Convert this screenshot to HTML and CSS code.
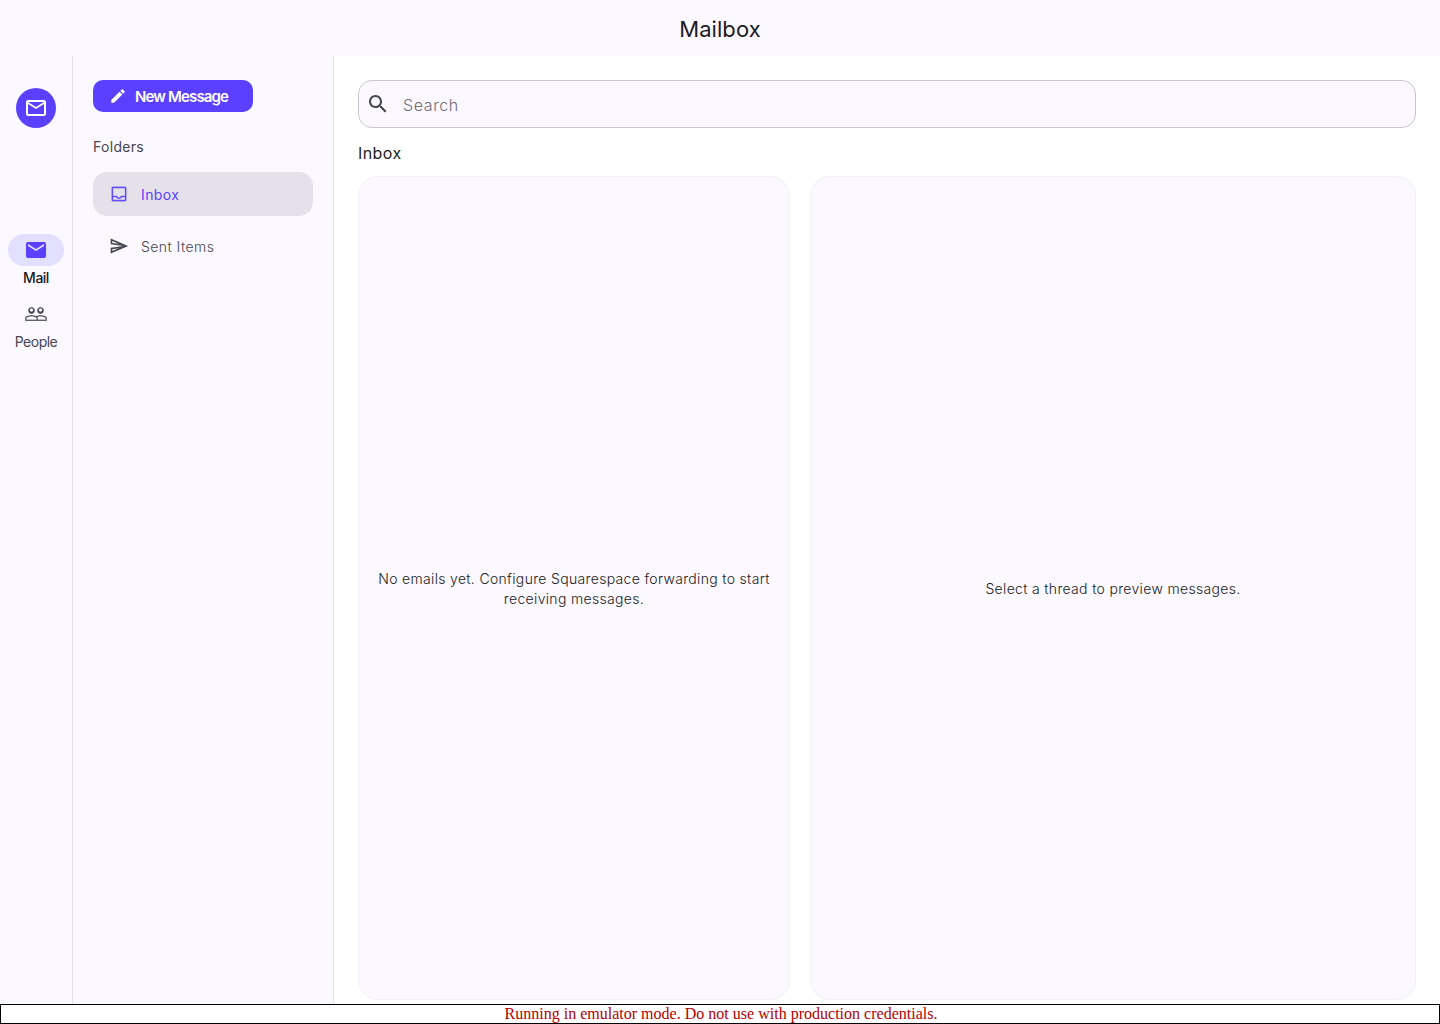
FILE: index.html
```html
<!DOCTYPE html>
<html lang="en">
<head>
<meta charset="utf-8">
<title>Mailbox</title>
<link rel="stylesheet" href="styles.css">
</head>
<body>
<div class="app">
  <header class="topbar"><h1 class="title">Mailbox</h1></header>
  <div class="body">
    <nav class="rail">
      <div class="logo"><svg class="i24" viewBox="0 0 24 24"><path d="M22 6c0-1.1-.9-2-2-2H4c-1.1 0-2 .9-2 2v12c0 1.1.9 2 2 2h16c1.100 0 2-.9 2-2V6zm-2 0l-8 5-8-5h16zm0 12H4V8l8 5 8-5v10z"/></svg></div>
      <div class="rail-items">
        <div class="rail-item active">
          <div class="pill"><svg class="i24" viewBox="0 0 24 24"><path d="M20 4H4c-1.100 0-1.990.9-1.990 2L2 18c0 1.100.9 2 2 2h16c1.100 0 2-.9 2-2V6c0-1.100-.9-2-2-2zm0 4l-8 5-8-5V6l8 5 8-5v2z"/></svg></div>
          <span class="rail-label">Mail</span>
        </div>
        <div class="rail-item">
          <div class="pill"><svg class="i24 thin" viewBox="0 0 24 24"><path d="M16.5 13c-1.200 0-3.070.34-4.500 1-1.430-.67-3.300-1-4.500-1C5.330 13 1 14.080 1 16.250V19h22v-2.750c0-2.170-4.330-3.250-6.500-3.250zm-4 4.500h-10v-1.250c0-.54 2.560-1.750 5-1.750s5 1.210 5 1.750v1.250zm9 0H14v-1.250c0-.46-.2-.86-.52-1.220.88-.3 1.960-.53 3.020-.53 2.440 0 5 1.210 5 1.750v1.250zM7.500 12c1.930 0 3.500-1.570 3.500-3.500S9.430 5 7.500 5 4 6.570 4 8.500 5.570 12 7.500 12zm0-5.500c.83 0 1.500.67 1.500 1.500s-.67 1.500-1.500 1.500S6 8.830 6 8s.67-1.500 1.500-1.500zm9 5.500c1.930 0 3.500-1.570 3.500-3.500S18.430 5 16.500 5 13 6.570 13 8.500s1.570 3.500 3.500 3.500zm0-5.500c.83 0 1.500.67 1.500 1.500s-.67 1.500-1.500 1.500S15 8.830 15 8s.67-1.500 1.500-1.500z"/></svg></div>
          <span class="rail-label">People</span>
        </div>
      </div>
    </nav>
    <aside class="folders">
      <button class="compose"><svg class="i18" viewBox="0 0 24 24"><path d="M3 17.250V21h3.750L17.810 9.940l-3.750-3.750L3 17.250zM20.710 7.040c.39-.39.39-1.020 0-1.410l-2.340-2.340c-.39-.39-1.020-.39-1.410 0l-1.830 1.830 3.750 3.750 1.830-1.830z"/></svg><span>New Message</span></button>
      <div class="folders-head">Folders</div>
      <div class="folder selected"><svg class="i20 thin-sel" viewBox="0 0 24 24"><path d="M19 3H4.990c-1.110 0-1.980.89-1.980 2L3 19c0 1.100.88 2 1.990 2H19c1.100 0 2-.9 2-2V5c0-1.110-.9-2-2-2zm0 16H5v-3h3.560c.69 1.190 1.970 2 3.450 2s2.750-.81 3.450-2H19v3zm0-5h-4.990c0 1.100-.9 2-2 2s-2-.9-2-2H5V5h14v9z"/></svg><span class="folder-name">Inbox</span></div>
      <div class="folder"><svg class="i20" viewBox="0 0 24 24"><path d="M4.010 6.030l7.510 3.220-7.520-1 .01-2.220m7.500 8.720L4 17.970v-2.220l7.510-1M2.010 3L2 10l15 2-15 2 .01 7L23 12 2.010 3z"/></svg><span class="sent">Sent Items</span></div>
    </aside>
    <main class="main">
      <div class="search">
        <svg class="i24" viewBox="0 0 24 24"><path d="M15.500 14h-.79l-.28-.27C15.410 12.590 16 11.110 16 9.500 16 5.910 13.090 3 9.500 3S3 5.910 3 9.500 5.910 16 9.500 16c1.610 0 3.090-.59 4.230-1.570l.27.28v.79l5 4.990L20.490 19l-4.990-5zm-6 0C7.010 14 5 11.990 5 9.500S7.010 5 9.500 5 14 7.010 14 9.500 11.990 14 9.500 14z"/></svg>
        <span class="placeholder">Search</span>
      </div>
      <h2 class="section">Inbox</h2>
      <div class="panes">
        <section class="pane"><p>No emails yet. Configure Squarespace forwarding to start receiving messages.</p></section>
        <section class="pane"><p>Select a thread to preview messages.</p></section>
      </div>
    </main>
  </div>
</div>
<p class="emu-warning">Running in emulator mode. Do not use with production credentials.</p>
</body>
</html>
```
FILE: styles.css
```css
* { box-sizing: border-box; }
html, body { margin: 0; padding: 0; height: 100%; }
body { background: #fff; font-family: Inter, "Open Sans", sans-serif; color: #1c1b1f; overflow: hidden; }
svg { display: block; fill: currentColor; flex: none; }
.i24 { width: 24px; height: 24px; }
.i20 { width: 20px; height: 20px; }
.i18 { width: 18px; height: 18px; }
.thin { stroke: #fbf8ff; stroke-width: 0.35; }
.thin-sel { stroke: #e5e1e8; stroke-width: 0.3; }

.app { height: 1024px; display: flex; flex-direction: column; }
.topbar { height: 56px; flex: none; background: #fbf8ff; display: flex; align-items: center; justify-content: center; }
.title { margin: 2px 0 0; font-size: 22px; line-height: 28px; font-weight: 400; letter-spacing: 0.05px; color: #1c1b22; }

.body { flex: 1; display: flex; min-height: 0; }

.rail { width: 73px; flex: none; background: #fbf8ff; border-right: 1px solid #e5e1ec; display: flex; flex-direction: column; align-items: center; padding-top: 32px; }
.logo { width: 40px; height: 40px; border-radius: 50%; background: #5b40ff; color: #fff; display: flex; align-items: center; justify-content: center; }
.rail-items { margin-top: 106px; display: flex; flex-direction: column; gap: 8px; align-items: center; }
.rail-item { width: 56px; display: flex; flex-direction: column; align-items: center; color: #47464f; }
.pill { width: 56px; height: 32px; border-radius: 16px; display: flex; align-items: center; justify-content: center; }
.rail-item.active .pill { background: #e3dfff; color: #5b40ff; }
.rail-label { font-size: 14px; line-height: 24px; letter-spacing: -0.5px; }
.rail-item.active .rail-label { color: #1c1b22; font-weight: 500; }

.folders { width: 261px; flex: none; background: #fbf8ff; border-right: 1px solid #e5e1ec; padding: 24px 20px 0; }
.compose { width: 160px; height: 32px; border: 0; border-radius: 10px; background: #5b40ff; color: #fff; display: flex; align-items: center; gap: 8px; padding: 2px 0 0 16px; font: 600 15px/20px Inter, sans-serif; letter-spacing: -0.85px; }
.compose svg { margin-top: -2px; }
.folders-head { margin-top: 24px; font-size: 14px; line-height: 22px; font-weight: 400; letter-spacing: 0.3px; color: #47464f; }
.folder { height: 44px; margin-top: 8px; display: flex; align-items: center; gap: 12px; padding-left: 16px; border-radius: 14px; font-size: 14px; color: #47464f; }
.folders-head + .folder { margin-top: 14px; }
.folder.selected { background: #e5e1e8; color: #5b40ff; }
.folder-name { letter-spacing: 0.4px; }
.sent { letter-spacing: 0.45px; font-weight: 300; }

.main { flex: 1; min-width: 0; padding: 24px 24px 0; display: flex; flex-direction: column; }
.search { height: 48px; flex: none; display: flex; align-items: center; gap: 13px; padding-left: 7px; background: #fbf8ff; border: 1px solid #c8c5d0; border-radius: 14px; color: #47464f; }
.placeholder { margin-top: 2px; font-size: 16px; letter-spacing: 0.6px; font-weight: 300; color: #6e6d78; }
.section { margin: 14px 0 12px; font-size: 16px; line-height: 22px; font-weight: 400; letter-spacing: 0.4px; color: #1c1b22; }
.panes { height: 824px; flex: none; display: grid; grid-template-columns: 432fr 606fr; gap: 20px; }
.pane { background: #fbf8ff; border: 1px solid #f3eff7; border-radius: 20px; display: flex; align-items: center; justify-content: center; padding: 2px 16px 0; text-align: center; }
.pane p { margin: 0; font-size: 14px; line-height: 20px; font-weight: 300; letter-spacing: 0.33px; color: #1c1b22; }

.emu-warning { position: fixed; left: 0; bottom: 0; width: 100%; height: 20px; margin: 0; padding-left: 2px; background: #fff; border: 1px solid #000; color: #b50000; font-family: "Liberation Serif", serif; font-size: 16px; line-height: 18px; letter-spacing: 0.01px; text-align: center; }
```
